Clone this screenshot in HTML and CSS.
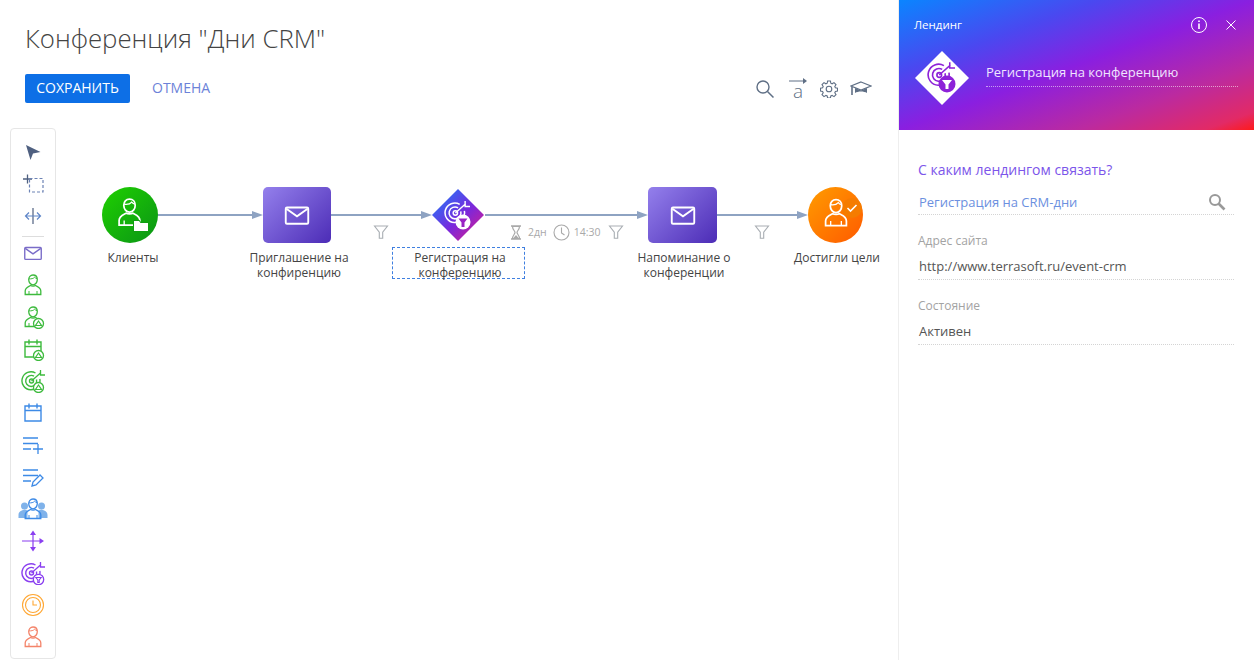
FILE: index.html
```html
<!DOCTYPE html>
<html lang="ru">
<head>
    <meta charset="UTF-8">
    <title>Конференция "Дни CRM"</title>
    <link rel="stylesheet" href="styles.css">
</head>
<body>
<svg class="defs" width="0" height="0">
    <defs>
        <linearGradient id="diamondGrad" x1="0" y1="0" x2="1" y2="1">
            <stop offset="0.15" stop-color="#2f6cf5"/>
            <stop offset="0.55" stop-color="#7a28dc"/>
            <stop offset="0.9" stop-color="#cc1f96"/>
        </linearGradient>
        <symbol id="person" viewBox="0 0 24 24">
            <path d="M12 2c2.600 0 4.300 2 4.300 4.600 0 2.800-1.900 5.200-4.300 5.200S7.700 9.400 7.700 6.600C7.700 4 9.400 2 12 2z" fill="none" stroke="currentColor" stroke-width="1.300"/>
            <path d="M8 5.800c2 .3 4.500-.2 5.700-1.600.6.800 1.400 1.300 2.500 1.500" fill="none" stroke="currentColor" stroke-width="1"/>
            <path d="M9.500 12.500C7 13.800 4.200 14.500 4.200 18v3.500h15.600V18c0-3.500-2.800-4.200-5.300-5.500-1 .8-3.900.8-5 0z" fill="none" stroke="currentColor" stroke-width="1.300"/>
            <path d="M8 21.500v-3.500M16 21.500v-3.500" fill="none" stroke="currentColor" stroke-width="1"/>
        </symbol>
        <symbol id="target" viewBox="0 0 24 24">
            <path d="M14.500 4A9 9 0 1 0 18.800 10" fill="none" stroke="currentColor" stroke-width="1.400"/>
            <path d="M13 7.200A5.500 5.500 0 1 0 15.500 10.500" fill="none" stroke="currentColor" stroke-width="1.400"/>
            <circle cx="10.500" cy="12" r="2" fill="none" stroke="currentColor" stroke-width="1.400"/>
            <path d="M10.500 12L20 3.500M19.500 1v5H24" fill="none" stroke="currentColor" stroke-width="1.300"/>
        </symbol>
        <symbol id="calendar" viewBox="0 0 24 24">
            <path d="M4 5h16v15H4zM4 9.500h16M8 2.500v5M16 2.500v5" fill="none" stroke="currentColor" stroke-width="1.400"/>
        </symbol>
        <symbol id="mail" viewBox="0 0 24 24">
            <path d="M4 6h16a1 1 0 0 1 1 1v11a1 1 0 0 1-1 1H4a1 1 0 0 1-1-1V7a1 1 0 0 1 1-1z" fill="none" stroke="currentColor" stroke-width="1.500"/>
            <path d="M3.500 7l8.500 6 8.500-6" fill="none" stroke="currentColor" stroke-width="1.500"/>
        </symbol>
        <symbol id="filter" viewBox="0 0 16 16">
            <path d="M1.500 2h13L9.700 8.200v6H6.300V8.200z" fill="none" stroke="currentColor" stroke-width="1.100"/>
        </symbol>
        <symbol id="badgeUp" viewBox="0 0 24 24">
            <circle cx="17.500" cy="18.500" r="5" fill="#fff" stroke="currentColor" stroke-width="1.300"/>
            <path d="M17.500 16l3 4.500h-6z" fill="none" stroke="currentColor" stroke-width="1.200"/>
        </symbol>
    </defs>
</svg>

<div class="app">
    <div class="main">
        <div class="top">
            <h1>Конференция "Дни CRM"</h1>
            <div class="actions">
                <button class="btn-save">СОХРАНИТЬ</button>
                <span class="btn-cancel">ОТМЕНА</span>
                <div class="top-icons">
                    <svg width="20" height="20" viewBox="0 0 20 20"><circle cx="8" cy="8" r="6" fill="none" stroke="currentColor" stroke-width="1.400"/><path d="M12.500 12.500l6 6" stroke="currentColor" stroke-width="1.500"/></svg>
                    <span class="icon-a"><svg width="18" height="6" viewBox="0 0 18 6"><path d="M0 3h16" stroke="currentColor" stroke-width="1"/><path d="M14 0l4 3-4 3z" fill="currentColor"/></svg><i>a</i></span>
                    <svg class="icon-gear" width="18" height="18" viewBox="0 0 18 18"><circle cx="9" cy="9" r="2.800" fill="none" stroke="currentColor" stroke-width="1.100"/><path d="M7.600 1h2.800l.4 2.200 1.300.6 1.900-1.200 2 2-1.200 1.900.6 1.300 2.100.4v2.800l-2.100.4-.6 1.300 1.200 1.900-2 2-1.900-1.200-1.300.6-.4 2.100H7.600l-.4-2.100-1.300-.6L4 16.600l-2-2 1.200-1.900-.6-1.300-2.100-.4V8.200l2.100-.4.600-1.300L2 4.600l2-2 1.900 1.200 1.300-.6z" fill="none" stroke="currentColor" stroke-width="1.100"/></svg>
                    <svg width="22" height="18" viewBox="0 0 22 18"><path d="M11 2L21 6 11 10 1 6z" fill="none" stroke="currentColor" stroke-width="1.200"/><path d="M5 8v5c3-2 9-2 12 0V8L11 10.500z" fill="currentColor"/><path d="M2 6.500V15" stroke="currentColor" stroke-width="1.600"/></svg>
                </div>
            </div>
        </div>

        <div class="work">
            <div class="toolbar">
                <div class="tool"><svg width="24" height="24" viewBox="0 0 24 24"><path d="M5 5l14.500 7-7.500 1.500L9.500 20z" fill="#4f6080"/></svg></div>
                <div class="tool"><svg width="24" height="24" viewBox="0 0 24 24"><path d="M2 7h9M6.500 2.500v9" stroke="#4f6080" stroke-width="1.300"/><path d="M8.500 6.500H22V20H8.500z" fill="none" stroke="#6d83b5" stroke-width="1.200" stroke-dasharray="3 2"/></svg></div>
                <div class="tool"><svg width="24" height="24" viewBox="0 0 24 24"><path d="M12 4v16" stroke="#4f6080" stroke-width="1.200"/><path d="M5 12h14M8 8.500L4.500 12 8 15.500M16 8.500l3.500 3.500-3.500 3.500" fill="none" stroke="#5f86c8" stroke-width="1.200"/></svg></div>
                <div class="tool-sep"></div>
                <div class="tool c-mail"><svg width="22" height="22"><use href="#mail"/></svg></div>
                <div class="tool c-green"><svg width="24" height="24"><use href="#person"/></svg></div>
                <div class="tool c-green"><svg width="24" height="24"><use href="#person"/><use href="#badgeUp"/></svg></div>
                <div class="tool c-green"><svg width="24" height="24"><use href="#calendar"/><use href="#badgeUp"/></svg></div>
                <div class="tool c-green"><svg width="24" height="24"><use href="#target"/><use href="#badgeUp"/></svg></div>
                <div class="tool c-blue"><svg width="24" height="24"><use href="#calendar"/></svg></div>
                <div class="tool c-blue"><svg width="24" height="24" viewBox="0 0 24 24"><path d="M2 5h15M2 10.500h15M2 16h8M17 11v10M12 16h10" fill="none" stroke="currentColor" stroke-width="1.300"/></svg></div>
                <div class="tool c-blue"><svg width="24" height="24" viewBox="0 0 24 24"><path d="M2 5h15M2 10.500h15M2 16h8" fill="none" stroke="currentColor" stroke-width="1.300"/><path d="M11 21l1-4 7-7 3 3-7 7z" fill="none" stroke="currentColor" stroke-width="1.300"/></svg></div>
                <div class="tool c-blue"><svg width="30" height="24" viewBox="0 0 30 24"><circle cx="6.500" cy="9" r="3.500" fill="#7fb2ea"/><circle cx="23.500" cy="9" r="3.500" fill="#7fb2ea"/><path d="M0.500 21v-3c0-3.500 3-4.500 6-5.500l3 1v7.500zM29.500 21v-3c0-3.500-3-4.500-6-5.500l-3 1v7.500z" fill="#7fb2ea"/><svg x="3" y="0" width="24" height="24"><use href="#person"/></svg></svg></div>
                <div class="tool c-purple"><svg width="24" height="24" viewBox="0 0 24 24"><path d="M1 12h20M12 5v14" stroke="currentColor" stroke-width="1.200"/><path d="M12 1.500l3 4.500H9zM12 22.500L9 18h6zM23 12l-4.500-3v6z" fill="currentColor"/></svg></div>
                <div class="tool c-purple"><svg width="24" height="24"><use href="#target"/><circle cx="17.500" cy="18.500" r="5.200" fill="#fff" stroke="currentColor" stroke-width="1.300"/><path d="M14.800 16.500h5.400l-2 2.500v2.500h-1.400V19z" fill="none" stroke="currentColor" stroke-width="1.100"/></svg></div>
                <div class="tool c-orange"><svg width="24" height="24" viewBox="0 0 24 24"><circle cx="12" cy="12" r="10.500" fill="none" stroke="currentColor" stroke-width="1.100"/><circle cx="12" cy="12" r="7.500" fill="none" stroke="currentColor" stroke-width="1.100"/><path d="M12 7.500V12h4" fill="none" stroke="currentColor" stroke-width="1.100"/></svg></div>
                <div class="tool c-coral"><svg width="24" height="24"><use href="#person"/></svg></div>
            </div>

            <div class="canvas">
                <svg class="lines" width="842" height="200">
                    <path d="M102 87h100M275 87h96M429 87h158M661 87h87" stroke="#8ea3c2" stroke-width="2" fill="none"/>
                    <path d="M196 83l11 4-11 4zM365 83l11 4-11 4zM581 83l11 4-11 4zM741 83l11 4-11 4z" fill="#8ea3c2"/>
                </svg>

                <div class="node node-client">
                    <svg width="56" height="56" viewBox="0 0 56 56">
                        <svg x="11.500" y="9.500" width="32" height="32"><use href="#person"/></svg>
                        <path d="M32 34h5l1.500 2H46v8H32z" fill="#fff" stroke="#0f9f12" stroke-width="2" paint-order="stroke"/>
                    </svg>
                </div>
                <div class="node node-mail node-mail1"><svg width="30" height="30"><use href="#mail"/></svg></div>
                <svg class="node-diamond" width="52" height="52" viewBox="0 0 52 52">
                    <path d="M26 0l26 26-26 26L0 26z" fill="url(#diamondGrad)"/>
                    <svg x="12" y="11" width="26" height="26" color="#fff"><use href="#target"/></svg>
                    <circle cx="31" cy="33" r="7.500" fill="#fff"/>
                    <path d="M26.500 29.500h9l-3 4V38h-3v-4.500z" fill="#9a24c4"/>
                </svg>
                <div class="node node-mail node-mail2"><svg width="30" height="30"><use href="#mail"/></svg></div>
                <div class="node node-goal">
                    <span class="goal-badge"><svg width="12" height="10" viewBox="0 0 12 10"><path d="M1.500 5l3 3 6-6" fill="none" stroke="#fff" stroke-width="1.600"/></svg></span>
                    <svg class="goal-person" width="32" height="32"><use href="#person"/></svg>
                </div>

                <div class="label label-client">Клиенты</div>
                <div class="label label-invite">Приглашение на конфиренцию</div>
                <div class="label label-reg">Регистрация на конференцию</div>
                <div class="label label-remind">Напоминание о конференции</div>
                <div class="label label-goal">Достигли цели</div>

                <svg class="edge-filter ef1" width="16" height="16"><use href="#filter"/></svg>
                <svg class="edge-filter ef2" width="16" height="16"><use href="#filter"/></svg>
                <svg class="edge-filter ef3" width="16" height="16"><use href="#filter"/></svg>

                <div class="edge-meta">
                    <svg width="12" height="15" viewBox="0 0 12 15"><path d="M1 1h10M1 14h10" stroke="currentColor" stroke-width="1.500"/><path d="M2.500 1.500h7c0 3-2.500 4.500-2.500 6s2.500 3 2.500 6h-7c0-3 2.500-4.500 2.500-6s-2.500-3-2.500-6z" fill="none" stroke="currentColor" stroke-width="1.200"/><path d="M3.500 13l2.500-3 2.500 3z" fill="currentColor"/></svg>
                    <span class="meta-days">2дн</span>
                    <svg width="17" height="17" viewBox="0 0 17 17"><circle cx="8.500" cy="8.500" r="7.500" fill="none" stroke="currentColor" stroke-width="1.100"/><path d="M8.500 3.500V9l3 2" fill="none" stroke="currentColor" stroke-width="1.100"/></svg>
                    <span class="meta-time">14:30</span>
                </div>
            </div>
        </div>
    </div>

    <div class="side">
        <div class="side-head">
            <div class="side-bar">
                <span class="side-kind">Лендинг</span>
                <svg class="info" width="18" height="18" viewBox="0 0 18 18"><circle cx="9" cy="9" r="7.500" fill="none" stroke="#fff" stroke-width="1"/><path d="M9 7.500V13M9 4.500v1.600" stroke="#fff" stroke-width="1.600"/></svg>
                <svg class="close" width="10" height="10" viewBox="0 0 10 10"><path d="M.5.500l9 9M9.500.500l-9 9" stroke="#fff" stroke-width="1"/></svg>
            </div>
            <div class="side-title-row">
                <svg width="54" height="54" viewBox="0 0 54 54">
                    <path d="M27 0l27 27-27 27L0 27z" fill="#fff"/>
                    <svg x="12" y="10" width="28" height="28" color="#8d22d8"><use href="#target"/></svg>
                    <circle cx="32" cy="33" r="8.500" fill="#8d22d8"/>
                    <path d="M27 29h10l-3.500 4.500V38h-3v-4.500z" fill="#fff"/>
                </svg>
                <div class="side-title">Регистрация на конференцию</div>
            </div>
        </div>
        <div class="side-body">
            <div class="question">С каким лендингом связать?</div>
            <div class="field field-link">
                <span>Регистрация на CRM-дни</span>
                <svg width="18" height="18" viewBox="0 0 18 18"><circle cx="7" cy="7" r="5" fill="none" stroke="#999" stroke-width="2"/><path d="M10.500 10.500l6 6" stroke="#999" stroke-width="2.600"/></svg>
            </div>
            <div class="cap">Адрес сайта</div>
            <div class="field">http://www.terrasoft.ru/event-crm</div>
            <div class="cap">Состояние</div>
            <div class="field">Активен</div>
        </div>
    </div>
</div>
</body>
</html>
```

FILE: styles.css
```css
html, body {
    margin: 0;
    height: 100%;
    overflow: hidden;
}
body {
    font-family: "Open Sans", Arial, sans-serif;
    background-color: #fff;
    color: #444;
}
.defs {
    display: block;
    height: 0;
}
.app {
    display: flex;
    height: 660px;
}
.main {
    width: 898px;
    display: flex;
    flex-direction: column;
    overflow: hidden;
}
.top {
    padding: 20px 25px 0;
    height: 107px;
    box-sizing: border-box;
}
h1 {
    margin: 0;
    font-size: 25.8px;
    font-weight: 300;
    line-height: 36px;
    color: #444;
}
.actions {
    display: flex;
    align-items: center;
    margin-top: 18px;
}
.btn-save {
    width: 105px;
    height: 29px;
    padding: 0 0 2px;
    border: none;
    border-radius: 2px;
    background-color: #0d6fe6;
    color: #fff;
    font-family: inherit;
    font-size: 14px;
}
.btn-cancel {
    margin-left: 22px;
    margin-bottom: 2px;
    font-size: 14px;
    color: #6c82d8;
}
.top-icons {
    margin-left: auto;
    margin-right: 1px;
    display: flex;
    align-items: center;
    gap: 13px;
    color: #5f6f85;
}
.icon-a {
    display: flex;
    flex-direction: column;
    align-items: center;
    width: 18px;
    margin-left: 1px;
}
.icon-a i {
    font-style: normal;
    font-size: 19px;
    line-height: 15px;
    font-weight: 300;
}
.icon-gear {
    margin-right: -1px;
}
.work {
    flex: 1;
    display: flex;
    padding: 21px 0 0 10px;
}
.toolbar {
    width: 46px;
    height: 531px;
    padding-top: 7px;
    flex-shrink: 0;
    border: 1px solid #e6e6e6;
    border-radius: 4px;
    box-sizing: border-box;
}
.tool {
    height: 32px;
    display: flex;
    align-items: center;
    justify-content: center;
}
.tool-sep {
    height: 1px;
    margin: 4px 11px 0;
    background-color: #ddd;
}
.c-mail { color: #7a6cc8; }
.c-green { color: #3dba3d; }
.c-blue { color: #3d8ae6; }
.c-purple { color: #8a3ff0; }
.c-orange { color: #ffa733; }
.c-coral { color: #f4846a; }

.canvas {
    position: relative;
    flex: 1;
}
.lines {
    position: absolute;
    left: 0;
    top: 0;
}
.node {
    position: absolute;
    top: 59px;
    height: 56px;
    display: flex;
    align-items: center;
    justify-content: center;
    color: #fff;
}
.node-client {
    left: 46px;
    width: 56px;
    border-radius: 50%;
    background: linear-gradient(135deg, #1fd000, #0a9416);
}
.node-mail {
    width: 68px;
    border-radius: 5px;
    background: linear-gradient(135deg, #9480ec, #4c2cb6);
}
.node-mail1 { left: 207px; }
.node-mail2 { left: 592px; width: 69px; }
.node-diamond {
    position: absolute;
    left: 376px;
    top: 61px;
}
.node-goal {
    left: 752px;
    width: 55px;
    border-radius: 50%;
    background: linear-gradient(135deg, #ff9c00, #ff5a00);
}
.goal-person {
    position: absolute;
    left: 12px;
    top: 10px;
}
.goal-badge {
    position: absolute;
    left: 34px;
    top: 11px;
    width: 20px;
    height: 20px;
    border-radius: 50%;
    background-color: #f57c00;
    display: flex;
    align-items: center;
    justify-content: center;
}
.label {
    position: absolute;
    top: 122px;
    width: 140px;
    text-align: center;
    font-size: 12px;
    line-height: 15px;
    color: #444;
}
.label-client { left: 7px; }
.label-invite { left: 178px; width: 130px; }
.label-reg {
    left: 336px;
    top: 119px;
    width: 133px;
    height: 32px;
    padding: 2px 0 0 3px;
    box-sizing: border-box;
    border: 1px dashed #3f7fe0;
}
.label-remind { left: 558px; }
.label-goal { left: 711px; }

.edge-filter {
    position: absolute;
    top: 96px;
    color: #a9aeb3;
}
.ef1 { left: 317px; }
.ef2 { left: 552px; }
.ef3 { left: 698px; }
.edge-meta {
    position: absolute;
    left: 454px;
    top: 95px;
    height: 18px;
    display: flex;
    align-items: center;
    color: #a9a9a9;
    font-size: 10.5px;
}
.meta-days {
    margin: 0 6px 0 6px;
}
.meta-time {
    margin-left: 4px;
}

.side {
    width: 356px;
    border-left: 1px solid #eee;
    box-sizing: border-box;
}
.side-head {
    height: 130px;
    box-sizing: border-box;
    padding: 16px 16px 0 16px;
    color: #fff;
    background: linear-gradient(to bottom right, #0a85ff 0%, #4a48f0 28%, #8a1fe0 50%, #bb2aa0 75%, #e22a66 93%, #ff1a1a 100%);
}
.side-bar {
    display: flex;
    align-items: center;
    height: 18px;
}
.side-kind {
    flex: 1;
    margin: -2px 0 0 -1px;
    font-size: 11.5px;
}
.close {
    margin: 0 2px 0 18px;
}
.side-title-row {
    display: flex;
    align-items: flex-start;
    margin-top: 17px;
}
.side-title {
    flex: 1;
    margin: 12px 0 0 17px;
    padding-bottom: 5px;
    line-height: 18px;
    font-size: 13px;
    border-bottom: 1px dotted rgba(255,255,255,0.55);
    color: #f0e4ff;
}
.side-body {
    padding: 30px 20px 0 19px;
}
.question {
    font-size: 14px;
    line-height: 20px;
    color: #7c55ea;
}
.field {
    margin-top: 4px;
    padding-left: 1px;
    height: 26px;
    line-height: 26px;
    font-size: 13px;
    color: #555;
    border-bottom: 1px dotted #d4d4d4;
}
.field-link {
    display: flex;
    align-items: center;
    justify-content: space-between;
    margin-top: 9px;
    padding-right: 8px;
    height: 25px;
    line-height: 24px;
    color: #6c90e0;
}
.cap {
    margin-top: 18px;
    font-size: 12px;
    line-height: 16px;
    color: #a3a3a3;
}
```
